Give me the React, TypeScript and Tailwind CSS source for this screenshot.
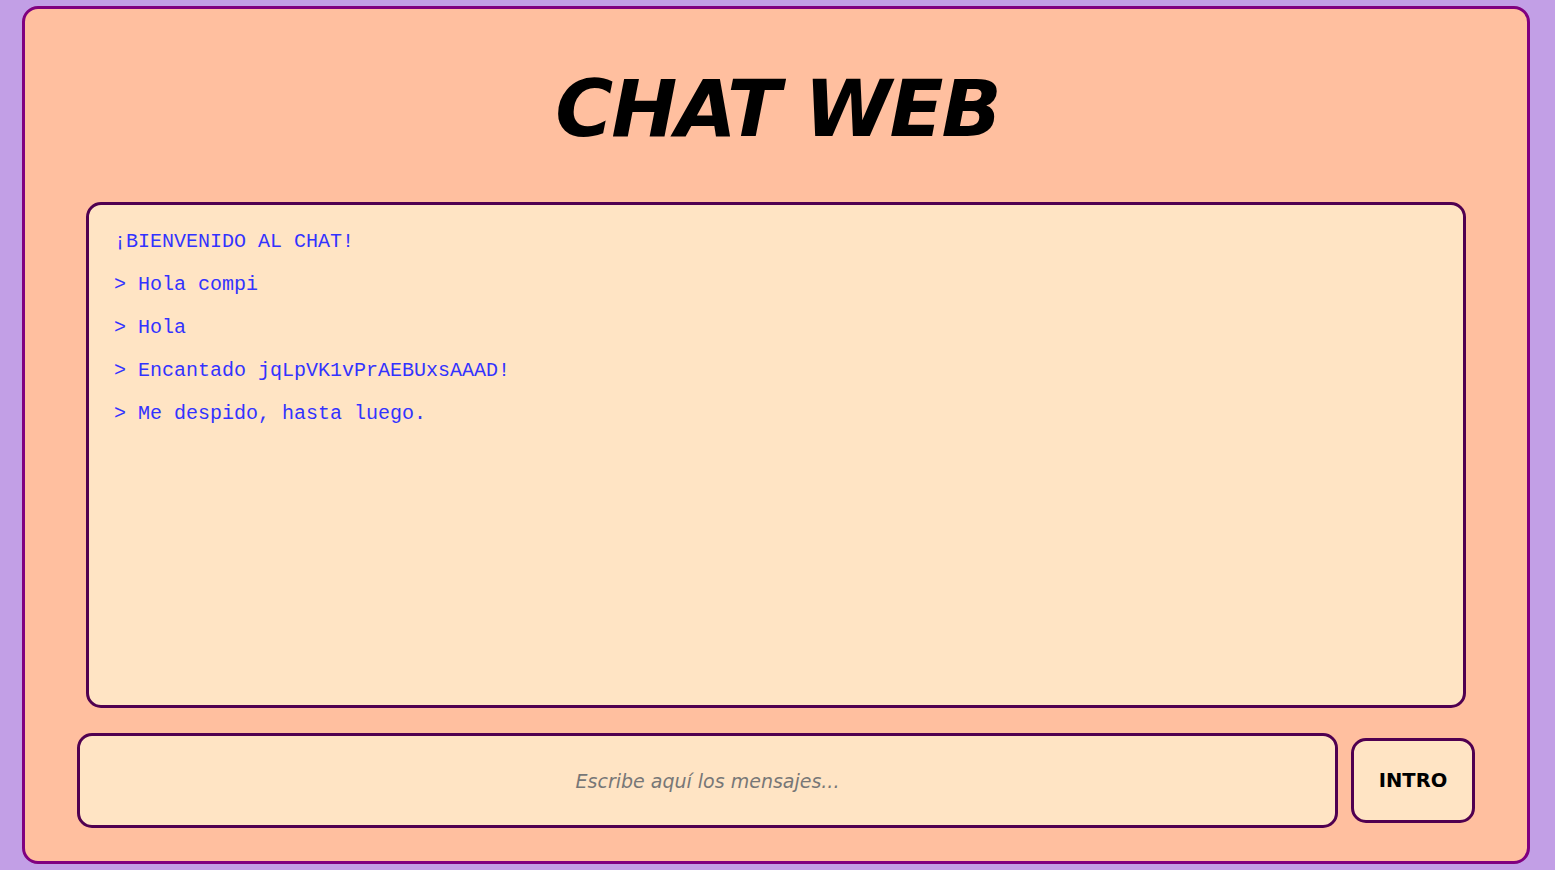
import { useState } from "react";

const messages = [
  "¡BIENVENIDO AL CHAT!",
  "> Hola compi",
  "> Hola",
  "> Encantado jqLpVK1vPrAEBUxsAAAD!",
  "> Me despido, hasta luego.",
];

export default function App() {
  const [text, setText] = useState("");

  return (
    <div className="h-[870px] w-full overflow-hidden bg-[#c29fe6] pl-[22px] pt-[6px]">
      <div className="flex h-[858px] w-[1508px] flex-col items-center rounded-[16px] border-[3px] border-[#800080] bg-[#ffbf9f]">
        <h1 className="mb-[46px] mt-[54px] pl-[3px] font-['DejaVu_Sans',sans-serif] text-[79px] font-bold italic leading-[93px] tracking-[-2px] text-black">
          CHAT WEB
        </h1>

        <div className="h-[506px] w-[1380px] rounded-[15px] border-[3px] border-[#500050] bg-[#ffe4c4] px-[25px] pt-[5px]">
          {messages.map((m, i) => (
            <p
              key={i}
              className="my-5 font-['Liberation_Mono',monospace] text-[20px] leading-[23px] whitespace-pre text-[#3333ff]"
            >
              {m}
            </p>
          ))}
        </div>

        <div className="mt-[25px] flex w-[1398px] items-center gap-[13px]">
          <input
            value={text}
            onChange={(e) => setText(e.target.value)}
            placeholder="Escribe aquí los mensajes..."
            className="h-[95px] flex-1 rounded-[15px] border-[3px] border-[#500050] bg-[#ffe4c4] text-center font-['DejaVu_Sans',sans-serif] text-[19px] italic text-black outline-none placeholder:text-[#777777]"
          />
          <button className="h-[85px] w-[124px] rounded-[15px] border-[3px] border-[#500050] bg-[#ffe4c4] font-['DejaVu_Sans',sans-serif] text-[19.5px] font-bold text-black">
            INTRO
          </button>
        </div>
      </div>
    </div>
  );
}
